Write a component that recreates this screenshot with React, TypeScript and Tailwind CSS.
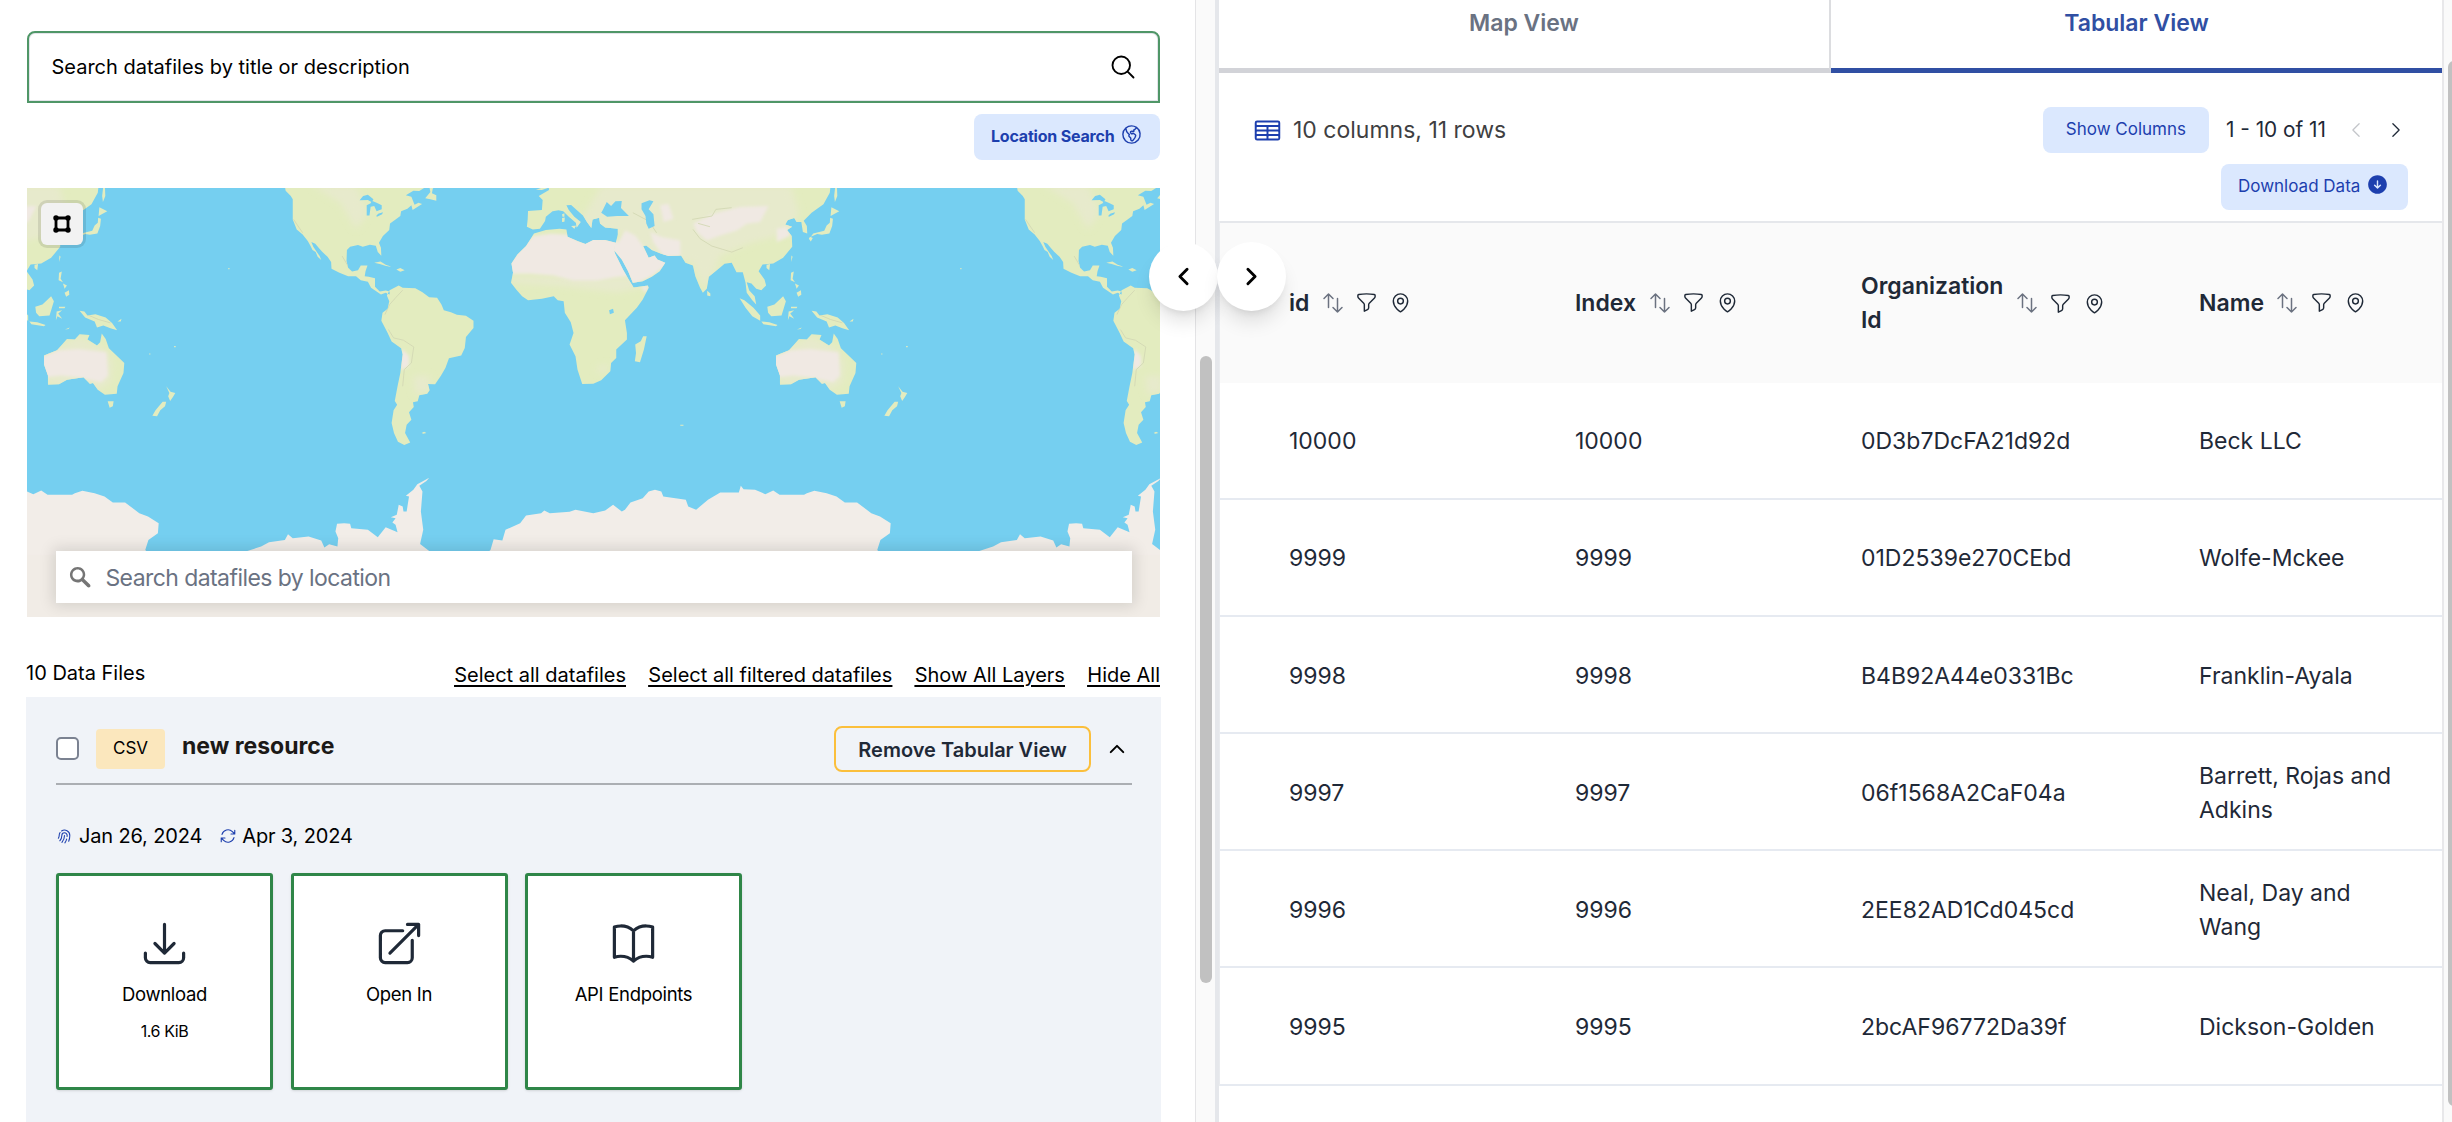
import React from "react";
import {
  HiOutlineMagnifyingGlass,
  HiOutlineGlobeAmericas,
  HiOutlineArrowDownTray,
  HiOutlineArrowTopRightOnSquare,
  HiOutlineBookOpen,
  HiOutlineArrowsUpDown,
  HiOutlineFunnel,
  HiOutlineMapPin,
  HiOutlineTableCells,
  HiOutlineFingerPrint,
  HiOutlineArrowPath,
  HiArrowDownCircle,
  HiOutlineChevronLeft,
  HiOutlineChevronRight,
  HiOutlineChevronUp,
} from "react-icons/hi2";

/* Land outlines of one world copy; the map repeats it every 1851 units. */
const LAND = [
  // North America
  "M720 560L722 574 735 590 740 600 740 660 750 690 765 705 778 725 785 740 790 752 798 758 803 772 812 782 808 770 800 756 792 742 787 728 797 733 806 746 815 758 828 772 837 788 838 808 858 820 880 830 900 830 912 842 930 847 938 865 952 876 963 885 975 880 985 885 985 876 975 873 960 876 948 862 948 836 932 832 922 830 924 815 929 798 912 798 905 812 890 816 880 805 876 785 877 752 885 742 905 737 917 742 935 736 950 739 955 758 964 769 963 745 958 730 968 710 984 692 986 672 1000 660 1012 650 1014 636 1030 628 1040 618 1043 632 1067 614 1058 610 1048 616 1044 604 1040 592 1026 588 1045 574 1060 575 1080 560Z",
  "M1085 560L1088 578 1075 597 1088 600 1103 604 1103 588 1092 582 1094 568 1100 560Z",
  "M946 790L962 786 975 796 990 802 976 800 960 794Z M1002 810L1012 806 1023 812 1012 817Z",
  // South America
  "M985 872L1008 858 1018 865 1050 866 1068 878 1085 893 1105 895 1116 915 1122 932 1140 938 1155 946 1178 949 1197 964 1197 985 1178 1012 1175 1045 1166 1068 1135 1076 1126 1105 1115 1128 1100 1154 1082 1153 1086 1172 1080 1182 1060 1187 1056 1205 1044 1208 1046 1222 1034 1238 1040 1260 1028 1275 1024 1300 1037 1328 1022 1336 1006 1326 996 1300 990 1270 995 1232 1004 1215 998 1204 1005 1160 1012 1120 1018 1065 1014 1046 990 1026 980 1000 964 964 967 940 980 928 984 905 978 888Z M1066 1300L1072 1296 1078 1300 1070 1302Z",
  // Europe, Asia
  "M1387 560L1388 572 1362 590 1372 602 1370 632 1335 635 1334 660 1332 682 1347 690 1365 688 1378 665 1380 652 1397 636 1412 633 1424 636 1438 652 1456 670 1458 684 1468 668 1452 652 1438 632 1432 618 1444 617 1458 632 1474 648 1484 668 1495 686 1498 660 1515 655 1517 672 1530 684 1562 688 1562 705 1557 730 1552 752 1572 780 1588 815 1600 850 1625 845 1648 832 1668 815 1682 790 1662 780 1655 768 1640 775 1634 760 1626 740 1634 738 1648 752 1670 762 1690 770 1722 768 1733 790 1752 798 1758 830 1770 865 1777 880 1787 868 1792 832 1820 805 1832 793 1850 790 1862 818 1878 818 1885 850 1888 880 1902 902 1912 915 1908 890 1894 872 1888 848 1900 852 1912 868 1925 872 1937 858 1933 840 1918 815 1928 795 1955 792 1980 775 2003 742 2002 710 1990 692 2003 682 1985 675 1992 662 2008 656 2014 668 2026 668 2030 698 2041 702 2040 680 2032 664 2052 640 2082 615 2098 580 2100 560Z",
  // British Isles tip
  "M1355 571L1370 565 1385 566 1370 572Z",
  // Mediterranean islands, Sri Lanka, Hainan
  "M1421 645L1427 642 1427 652 1422 652Z M1421 656L1428 654 1427 667 1421 668Z M1444 680L1456 679 1452 688Z M1788 874L1796 882 1796 890 1788 888Z M1938 796L1947 794 1945 812 1938 806Z",
  // Africa
  "M1557 730L1530 722 1500 722 1480 734 1460 725 1435 712 1432 690 1415 688 1380 692 1350 702 1343 716 1330 740 1308 765 1293 792 1297 820 1292 850 1305 870 1320 890 1335 902 1370 898 1400 890 1410 902 1425 905 1428 940 1443 968 1450 1000 1440 1035 1455 1070 1460 1110 1472 1153 1500 1152 1520 1142 1543 1115 1545 1090 1558 1075 1558 1050 1585 1020 1585 1000 1580 962 1610 925 1625 900 1640 865 1638 858 1602 864 1592 845 1575 810 1555 762 1552 750Z",
  "M1605 1085L1618 1088 1628 1050 1635 1010 1626 1010 1620 1025 1606 1035 1608 1060Z",
  // Japan, Sakhalin, Philippines
  "M2112 560L2116 560 2117 590 2111 608 2109 590Z M2100 650L2102 624 2122 636 2108 645Z M2099 655L2106 658 2104 680 2097 702 2078 706 2066 704 2050 712 2056 702 2084 694 2090 678 2098 670Z M2048 712L2055 716 2050 726 2045 718Z M2001 768L2004 772 2000 788Z M2000 820L2007 816 2004 838 2010 848 1999 842Z M2014 880L2025 872 2026 886 2018 892Z M2010 852L2020 858 2014 868Z",
  // Indonesia, New Guinea
  "M1870 896L1882 902 1905 925 1922 948 1922 964 1902 950 1885 925Z M1925 966L1945 968 1966 976 1962 980 1930 974Z M1940 922L1958 915 1980 890 1987 905 1982 925 1976 948 1950 950 1942 940Z M1994 936L2008 932 1998 942 2008 958 1996 950 1992 962Z M2000 922L2016 922 2014 926 2000 926Z M2052 934L2064 936 2072 948 2092 944 2118 954 2134 970 2147 992 2130 986 2112 978 2096 984 2090 966 2066 954Z M2148 966L2158 958 2156 966Z M2015 990L2027 984 2024 988Z",
  // Australia, Tasmania, New Zealand
  "M1962 1068L1995 1052 2008 1035 2020 1018 2040 1020 2052 1004 2077 1006 2072 1020 2096 1038 2104 1028 2108 1002 2118 1018 2126 1046 2152 1075 2165 1090 2163 1120 2148 1160 2146 1182 2116 1185 2098 1170 2086 1150 2078 1152 2062 1133 2020 1140 2000 1154 1972 1155 1972 1128 1962 1095Z M2123 1205L2138 1205 2136 1220 2128 1224Z M2271 1160L2282 1176 2294 1180 2288 1192 2281 1204 2276 1190 2279 1180Z M2262 1206L2271 1206 2268 1220 2256 1232 2248 1250 2236 1248 2244 1232Z",
  "M577 806h3v3h-3z M2291 1039h4v4h-4z M2228 1062h3v3h-3z M1720 1275h8v3h-8z",
];
const ICE =
  "M610 1665L625 1653 660 1640 680 1627 720 1620 728 1603 740 1615 780 1610 812 1622 820 1643 832 1633 853 1640 855 1615 848 1595 852 1572 870 1570 885 1572 888 1585 930 1590 955 1612 975 1582 1005 1597 1000 1575 992 1568 1000 1555 988 1552 1003 1545 1008 1515 1018 1520 1020 1535 1028 1535 1034 1490 1026 1488 1045 1470 1055 1453 1085 1434 1078 1444 1060 1458 1068 1475 1064 1535 1070 1590 1062 1632 1085 1653 1105 1665 1225 1665 1240 1650 1248 1618 1270 1622 1278 1590 1315 1570 1330 1547 1368 1540 1376 1532 1390 1540 1440 1536 1455 1530 1500 1540 1530 1532 1550 1515 1572 1535 1580 1530 1594 1508 1625 1495 1640 1475 1656 1470 1672 1475 1677 1490 1734 1500 1740 1520 1760 1530 1790 1500 1821 1478 1868 1478 1873 1458 1880 1468 1909 1470 1935 1483 1955 1472 1971 1485 2033 1485 2040 1480 2059 1473 2090 1480 2115 1490 2136 1508 2167 1508 2203 1540 2225 1550 2252 1570 2250 1600 2226 1620 2218 1650 2230 1665V1860H610Z";
const LAKES =
  "M909 603L918 590 930 586 944 600 940 609 930 602Z M927 618L937 612 940 604 952 610 965 618 965 630 952 636 946 620 937 622 934 648 927 648Z M951 650L956 643 968 639 966 645 953 652Z " +
  "M1524 632L1534 608 1545 620 1556 606 1572 605 1570 626 1590 650 1560 650 1535 652 1520 640Z M1622 612L1642 603 1652 606 1640 630 1652 645 1655 680 1640 688 1634 672 1632 650 1622 630Z M1540 932L1550 928 1552 940 1542 944Z";
const STEPPE =
  "M1520 560H2000L2020 640 2000 700 1900 730 1820 770 1810 810 1780 870 1750 790 1640 760 1560 700 1440 690 1480 640Z " +
  "M1962 1060L2000 1040 2050 1010 2120 1050 2135 1090 2130 1150 2100 1170 1970 1150Z M1290 830H1600L1640 860 1560 880 1420 860 1290 850Z M790 560H900L930 640 900 690 860 610Z M1045 1130L1085 1128 1088 1178 1050 1184Z M1515 1100L1540 1095 1530 1120 1508 1115Z";
const DESERT =
  "M1285 823L1290 788 1320 743 1348 710 1391 703 1433 705 1471 728 1488 714 1560 722 1560 748 1600 828 1555 833 1509 843 1450 843 1399 828 1340 823Z " +
  "M1555 743L1581 693 1606 708 1631 748 1669 773 1690 793 1648 830 1600 856 1572 788Z M1644 698L1673 713 1720 723 1720 772 1678 772 1652 728Z M1669 618L1690 613 1703 658 1678 668Z " +
  "M1753 673L1804 643 1871 623 1943 620 1922 668 1888 673 1863 693 1821 708 1787 723 1762 698Z M1964 688L1989 683 1998 708 1964 728Z " +
  "M1955 1073L1998 1053 2048 1048 2120 1058 2124 1128 2107 1148 2048 1133 2006 1128 1965 1133Z M1012 1075L1018 1048 1034 1070 1034 1100 1014 1112Z M1620 862L1642 858 1632 880Z";
const RELIEF =
  "M1018 872L1000 895 985 915 973 945 M982 990L995 1015 1020 1022 1046 1042 1040 1090 1022 1110 1018 1160 M1752 690L1770 718 1800 740 1850 758 1878 745 M1750 660L1800 650 1810 630 1850 625 M1765 672L1795 682 M1600 640L1640 665 1660 700 M2070 945L2100 960 2130 970 M742 660L765 700 M865 770L885 810";

function WorldCopy({ dx }: { dx: number }) {
  return (
    <g transform={`translate(${dx} 0)`}>
      <path d={LAND.join(" ")} fill="#e3ecbf" />
      <g clipPath="url(#land)">
        <path d={STEPPE} fill="#e7eacc" filter="url(#soft)" />
        <path d={DESERT} fill="#f0e9e3" filter="url(#edge)" />
        <path d={RELIEF} fill="none" stroke="#d3d9b4" strokeWidth="2.5" filter="url(#faint)" />
      </g>
      <path d={LAKES} fill="#75cff0" />
      <path d={ICE} fill="#f2ede8" />
    </g>
  );
}

function WorldMap() {
  return (
    <svg className="block h-full w-full" viewBox="68 566 2865 1285" preserveAspectRatio="none">
      <defs>
        <clipPath id="land">
          <path d={LAND.join(" ")} />
        </clipPath>
        <filter id="soft" x="-5%" y="-5%" width="110%" height="110%">
          <feGaussianBlur stdDeviation="10" />
        </filter>
        <filter id="edge" x="-5%" y="-5%" width="110%" height="110%">
          <feGaussianBlur stdDeviation="4" />
        </filter>
        <filter id="faint">
          <feGaussianBlur stdDeviation="1.5" />
        </filter>
      </defs>
      <rect x="0" y="500" width="3000" height="1400" fill="#75cff0" />
      <WorldCopy dx={-1851} />
      <WorldCopy dx={0} />
      <WorldCopy dx={1851} />
      <rect x="0" y="1665" width="3000" height="240" fill="#f1ece6" />
    </svg>
  );
}

function MapSearch() {
  return (
    <div className="relative mt-7 h-[429px] overflow-hidden">
      <WorldMap />
      <button className="absolute left-[14px] top-[15px] flex h-[42px] w-[42px] items-center justify-center rounded-md bg-[#f2f2f2] shadow-[0_0_0_3px_rgba(0,0,0,0.1)]">
        <svg width="20" height="20" viewBox="0 0 20 20" fill="none" stroke="#000">
          <path d="M4 4H16V16H4Z" strokeWidth="2.8" />
          <path d="M4 4h.01M16 4h.01M4 16h.01M16 16h.01" strokeWidth="5.4" strokeLinecap="round" />
        </svg>
      </button>
      <div className="absolute left-[29px] top-[363px] flex h-[52px] w-[1076px] items-center bg-white pl-[10px] shadow-[0_0_14px_3px_rgba(0,0,0,0.12)]">
        <svg width="28.4" height="28.4" viewBox="0 0 18 18" fill="#757575">
          <path d="M7.4 2.5c-2.7 0-4.9 2.2-4.9 4.9s2.2 4.9 4.9 4.9c1 0 1.8-.2 2.5-.8l3.7 3.7c.2.2.4.3.8.3.7 0 1.1-.4 1.1-1.1 0-.3-.1-.5-.3-.8L11.4 10c.4-.8.8-1.6.8-2.5.1-2.8-2.1-5-4.8-5zm0 1.6c1.8 0 3.2 1.4 3.2 3.2s-1.4 3.2-3.2 3.2-3.3-1.3-3.3-3.1 1.4-3.3 3.3-3.3z" />
        </svg>
        <span className="ml-[11px] pt-[2px] text-[23px] tracking-[-0.57px] text-gray-500">
          Search datafiles by location
        </span>
      </div>
    </div>
  );
}

function ActionCard({ icon, label, note }: { icon: React.ReactNode; label: string; note?: string }) {
  return (
    <div className="flex h-[217px] w-[217px] flex-col items-center rounded-[3px] border-[3px] border-[#2f8648] bg-white pt-[42px] text-black shadow-sm">
      <div className="text-[51px] text-[#1f2937]">{icon}</div>
      <div className="mt-[11px] text-[18.5px] leading-[28px] tracking-[-0.3px]">{label}</div>
      {note && <div className="mt-[11px] text-[16px] leading-[24px] tracking-[-0.4px]">{note}</div>}
    </div>
  );
}

function DatafilesPanel() {
  return (
    <section className="h-full w-[1195px] shrink-0 overflow-hidden pl-[27px] pr-[35px] pt-[31px]">
      <div className="flex h-[72px] items-center rounded-t-lg border-2 border-[#4f9667] pl-[22.5px] pr-[21px] shadow-[inset_0_0_0_1px_#e3e4ea]">
        <span className="grow text-[20px] text-black">Search datafiles by title or description</span>
        <HiOutlineMagnifyingGlass className="text-[28px] text-black" strokeWidth={1.6} />
      </div>
      <div className="mt-[11px] flex justify-end">
        <button className="flex h-[46px] w-[186px] items-start rounded-lg bg-[#dbe8fe] pl-[17px] pt-[9px] text-[#1d3fae]">
          <span className="text-[16px] font-bold leading-[26px] tracking-[-0.2px]">Location Search</span>
          <HiOutlineGlobeAmericas className="ml-[6px] text-[23px]" />
        </button>
      </div>
      <MapSearch />
      <div className="mt-[37px] flex h-[43px] items-start justify-between text-black">
        <span className="-ml-px pt-[3px] text-[20px] leading-[32px]">10 Data Files</span>
        <div className="flex gap-[22.4px] pt-[5px] text-[20px] leading-[32px] underline underline-offset-[3px]">
          <a>Select all datafiles</a>
          <a>Select all filtered datafiles</a>
          <a>Show All Layers</a>
          <a>Hide All</a>
        </div>
      </div>
      <article className="-ml-px h-[460px] w-[1135px] bg-[#f0f3f8] px-[30px] pt-[29px]">
        <header className="flex h-[59px] w-[1076px] items-start border-b-2 border-[#abaeb3]">
          <span className="mt-[11px] h-[23px] w-[23px] rounded-[5px] border-2 border-[#7b8291] bg-white" />
          <span className="ml-[17px] mt-[3px] flex h-[40px] w-[69px] items-center justify-center rounded-sm bg-[#fbe7bd] text-[17px] text-black">
            CSV
          </span>
          <h3 className="ml-[17px] mt-[3px] grow text-[23px] font-bold leading-[34px] text-[#1c1917]">new resource</h3>
          <button className="flex h-[46px] w-[257px] items-center justify-center rounded-lg border-2 border-[#fbbf3c] pt-px text-[20px] font-semibold text-[#1f2937]">
            Remove Tabular View
          </button>
          <HiOutlineChevronUp className="ml-[16px] mr-[5px] mt-[13px] text-[20px] text-black" strokeWidth={2.4} />
        </header>
        <div className="mt-[35px] flex h-[32px] items-center text-[20px] tracking-[-0.15px] text-black">
          <HiOutlineFingerPrint className="mr-[6px] text-[17px] text-[#1d3fae]" />
          <span>Jan 26, 2024</span>
          <HiOutlineArrowPath className="ml-[17px] mr-[5px] text-[18px] text-[#1d3fae]" />
          <span>Apr 3, 2024</span>
        </div>
        <div className="mt-[21px] flex gap-[17.5px]">
          <ActionCard icon={<HiOutlineArrowDownTray />} label="Download" note="1.6 KiB" />
          <ActionCard icon={<HiOutlineArrowTopRightOnSquare />} label="Open In" />
          <ActionCard icon={<HiOutlineBookOpen />} label="API Endpoints" />
        </div>
      </article>
    </section>
  );
}

const COLUMNS = ["id", "Index", "Organization Id", "Name"];
const ROWS = [
  ["10000", "10000", "0D3b7DcFA21d92d", "Beck LLC"],
  ["9999", "9999", "01D2539e270CEbd", "Wolfe-Mckee"],
  ["9998", "9998", "B4B92A44e0331Bc", "Franklin-Ayala"],
  ["9997", "9997", "06f1568A2CaF04a", "Barrett, Rojas and Adkins"],
  ["9996", "9996", "2EE82AD1Cd045cd", "Neal, Day and Wang"],
  ["9995", "9995", "2bcAF96772Da39f", "Dickson-Golden"],
];

function DataTable() {
  return (
    <div className="border-l border-[#e9ebee] text-[23px] leading-[34.3px] text-[#1f2937]">
      <div className="grid h-[162px] grid-cols-[286px_286px_338px_1fr] items-center border-t-2 border-[#e5e7eb] bg-[#fafafa] pl-[69px]">
        {COLUMNS.map((name) => (
          <div key={name} className="flex items-center">
            <span className={name === "Organization Id" ? "w-[142px] font-semibold" : "font-semibold"}>{name}</span>
            <HiOutlineArrowsUpDown className="ml-[11.5px] text-[24px] text-[#6b7280]" strokeWidth={1.5} />
            <HiOutlineFunnel className="ml-[10.5px] text-[23px]" strokeWidth={1.5} />
            <HiOutlineMapPin className="ml-[11px] text-[23px]" strokeWidth={1.5} />
          </div>
        ))}
      </div>
      {ROWS.map((row) => (
        <div
          key={row[0]}
          className="grid h-[117.1px] grid-cols-[286px_286px_338px_1fr] items-center border-b-2 border-[#e6eaf1] pl-[69px] pt-[2px]"
        >
          {row.map((cell, i) => (
            <div key={i} className="max-w-[215px]">
              {cell}
            </div>
          ))}
        </div>
      ))}
    </div>
  );
}

function TabularPanel() {
  return (
    <section className="h-full w-[1223px] shrink-0 overflow-hidden">
      <div className="flex h-[73px] items-start text-[23px] font-semibold leading-[46px]">
        <div className="h-full w-[612px] border-b-[5px] border-r-2 border-b-[#d2d3d8] border-r-[#dcdde0] text-center text-gray-500">
          Map View
        </div>
        <div className="h-full grow border-b-[5px] border-[#304fa3] text-center text-[#304fa3]">Tabular View</div>
      </div>
      <div className="flex h-[148px] justify-between pl-[34px] pr-[34px] pt-[34px]">
        <div className="flex h-[46px] items-center">
          <HiOutlineTableCells className="text-[29px] text-[#1d3fae]" strokeWidth={1.6} />
          <span className="ml-[11px] text-[23px] text-[#3f3f42]">10 columns, 11 rows</span>
        </div>
        <div className="flex flex-col items-end">
          <div className="flex items-center">
            <button className="h-[46px] w-[166px] rounded-lg bg-[#dbe8fe] text-[17px] text-[#1d3fae]">Show Columns</button>
            <span className="ml-[17px] text-[20.8px] text-[#1f2937]">1 - 10 of 11</span>
            <HiOutlineChevronLeft className="ml-[20px] text-[20px] text-[#c4c6ca]" />
            <HiOutlineChevronRight className="ml-[20px] mr-[2px] text-[20px] text-[#1f2937]" />
          </div>
          <button className="mt-[11px] flex h-[46px] w-[187px] items-center rounded-lg bg-[#dbe8fe] pl-[17px] text-[17px] text-[#1d3fae]">
            Download Data
            <HiArrowDownCircle className="-mt-[5px] ml-[6px] text-[23px]" />
          </button>
        </div>
      </div>
      <DataTable />
    </section>
  );
}

export default function App() {
  return (
    <main className="relative flex h-[1122px] w-[2452px] overflow-hidden bg-white font-['Inter',sans-serif]">
      <DatafilesPanel />
      <div className="flex h-full w-[20px] shrink-0 border-l border-[#e4e4e6] bg-[#fafafa] pl-[4px] pt-[356px]">
        <div className="h-[627px] w-[12px] shrink-0 rounded-full bg-[#c1c1c1]" />
      </div>
      <div className="h-full w-[4px] shrink-0 bg-[#e5e7eb]" />
      <TabularPanel />
      <div className="h-full w-[10px] shrink-0 border-l-2 border-[#e8e8ea] bg-[#fafafa] pl-[4px] pt-[61px]">
        <div className="h-[1045px] w-[12px] rounded-full bg-[#c1c1c1]" />
      </div>
      <button className="absolute left-[1149px] top-[242px] flex h-[69px] w-[69px] items-center justify-center rounded-full bg-white shadow-[0_14px_20px_-4px_rgba(0,0,0,0.12),0_5px_9px_-5px_rgba(0,0,0,0.12)]">
        <HiOutlineChevronLeft className="text-[23px] text-black" strokeWidth={3} />
      </button>
      <button className="absolute left-[1217px] top-[242px] flex h-[69px] w-[69px] items-center justify-center rounded-full bg-white shadow-[0_14px_20px_-4px_rgba(0,0,0,0.12),0_5px_9px_-5px_rgba(0,0,0,0.12)]">
        <HiOutlineChevronRight className="text-[23px] text-black" strokeWidth={3} />
      </button>
    </main>
  );
}
